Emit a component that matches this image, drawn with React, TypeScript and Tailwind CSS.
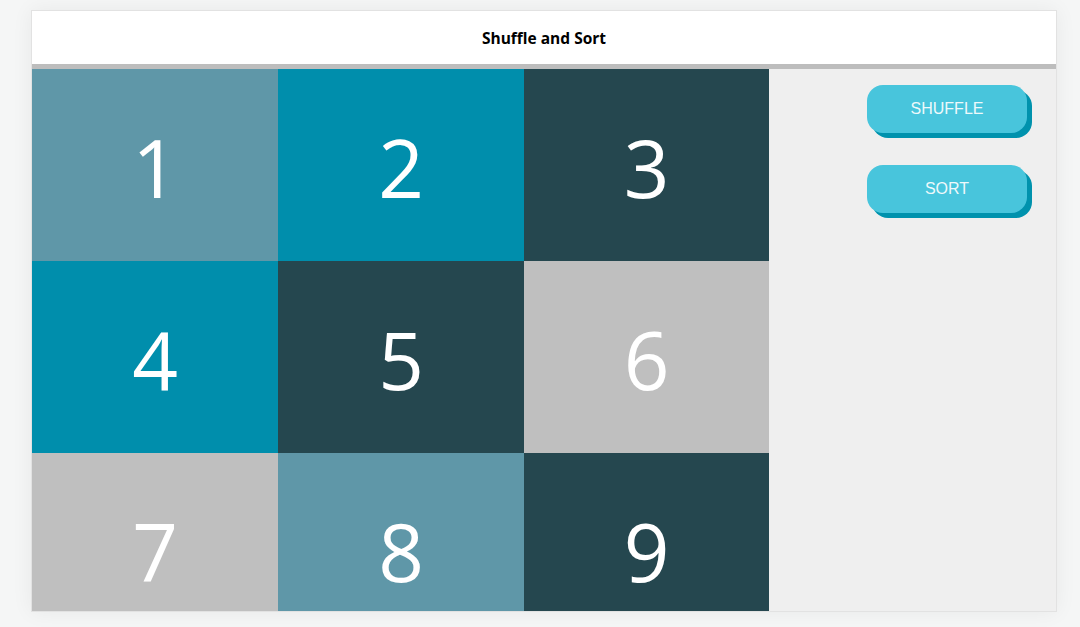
import React from "react";

const cells: { n: number; c: string }[] = [
  { n: 1, c: "bg-[#5f97a8]" },
  { n: 2, c: "bg-[#008eac]" },
  { n: 3, c: "bg-[#25474f]" },
  { n: 4, c: "bg-[#008eac]" },
  { n: 5, c: "bg-[#25474f]" },
  { n: 6, c: "bg-[#bfbfbf]" },
  { n: 7, c: "bg-[#bfbfbf]" },
  { n: 8, c: "bg-[#5f97a8]" },
  { n: 9, c: "bg-[#25474f]" },
];

export default function App() {
  return (
    <div className="w-[1080px] h-[627px] bg-[#f5f6f6] pt-[10px] pl-[31px] overflow-hidden">
      <div className="w-[1026px] h-[602px] border border-[#e2e2e2] bg-white shadow-[0_0_20px_rgba(0,0,0,0.06)] flex flex-col overflow-hidden">
        <div className="h-[53px] shrink-0 flex items-center justify-center bg-white">
          <span
            className="text-[15.5px] font-bold text-black pt-[3px]"
            style={{ fontFamily: '"Open Sans", "Noto Sans", sans-serif' }}
          >
            Shuffle and Sort
          </span>
        </div>
        <div className="h-[5px] shrink-0 bg-[#bdbdbd]" />
        <div className="flex flex-1 min-h-0">
          <div className="w-[737px] shrink-0 grid grid-cols-[246px_246px_245px] auto-rows-[192px] overflow-hidden">
            {cells.map((cell) => (
              <div
                key={cell.n}
                className={`${cell.c} flex items-center justify-center text-white text-[80px] leading-none pt-[4px]`}
                style={{ fontFamily: '"Open Sans", "Noto Sans", sans-serif' }}
              >
                {cell.n}
              </div>
            ))}
          </div>
          <div className="flex-1 bg-[#efefef] flex flex-col items-end pr-[29px] pt-[16px] gap-[32px]">
            {["SHUFFLE", "SORT"].map((t) => (
              <button
                key={t}
                className="w-[160px] h-[48px] rounded-[16px] bg-[#48c5dc] text-[#eef9fb] text-[16px] shadow-[5px_5px_0_#0092ad] flex items-center justify-center"
                style={{ fontFamily: '"Liberation Sans", Arial, sans-serif' }}
              >
                {t}
              </button>
            ))}
          </div>
        </div>
      </div>
    </div>
  );
}
